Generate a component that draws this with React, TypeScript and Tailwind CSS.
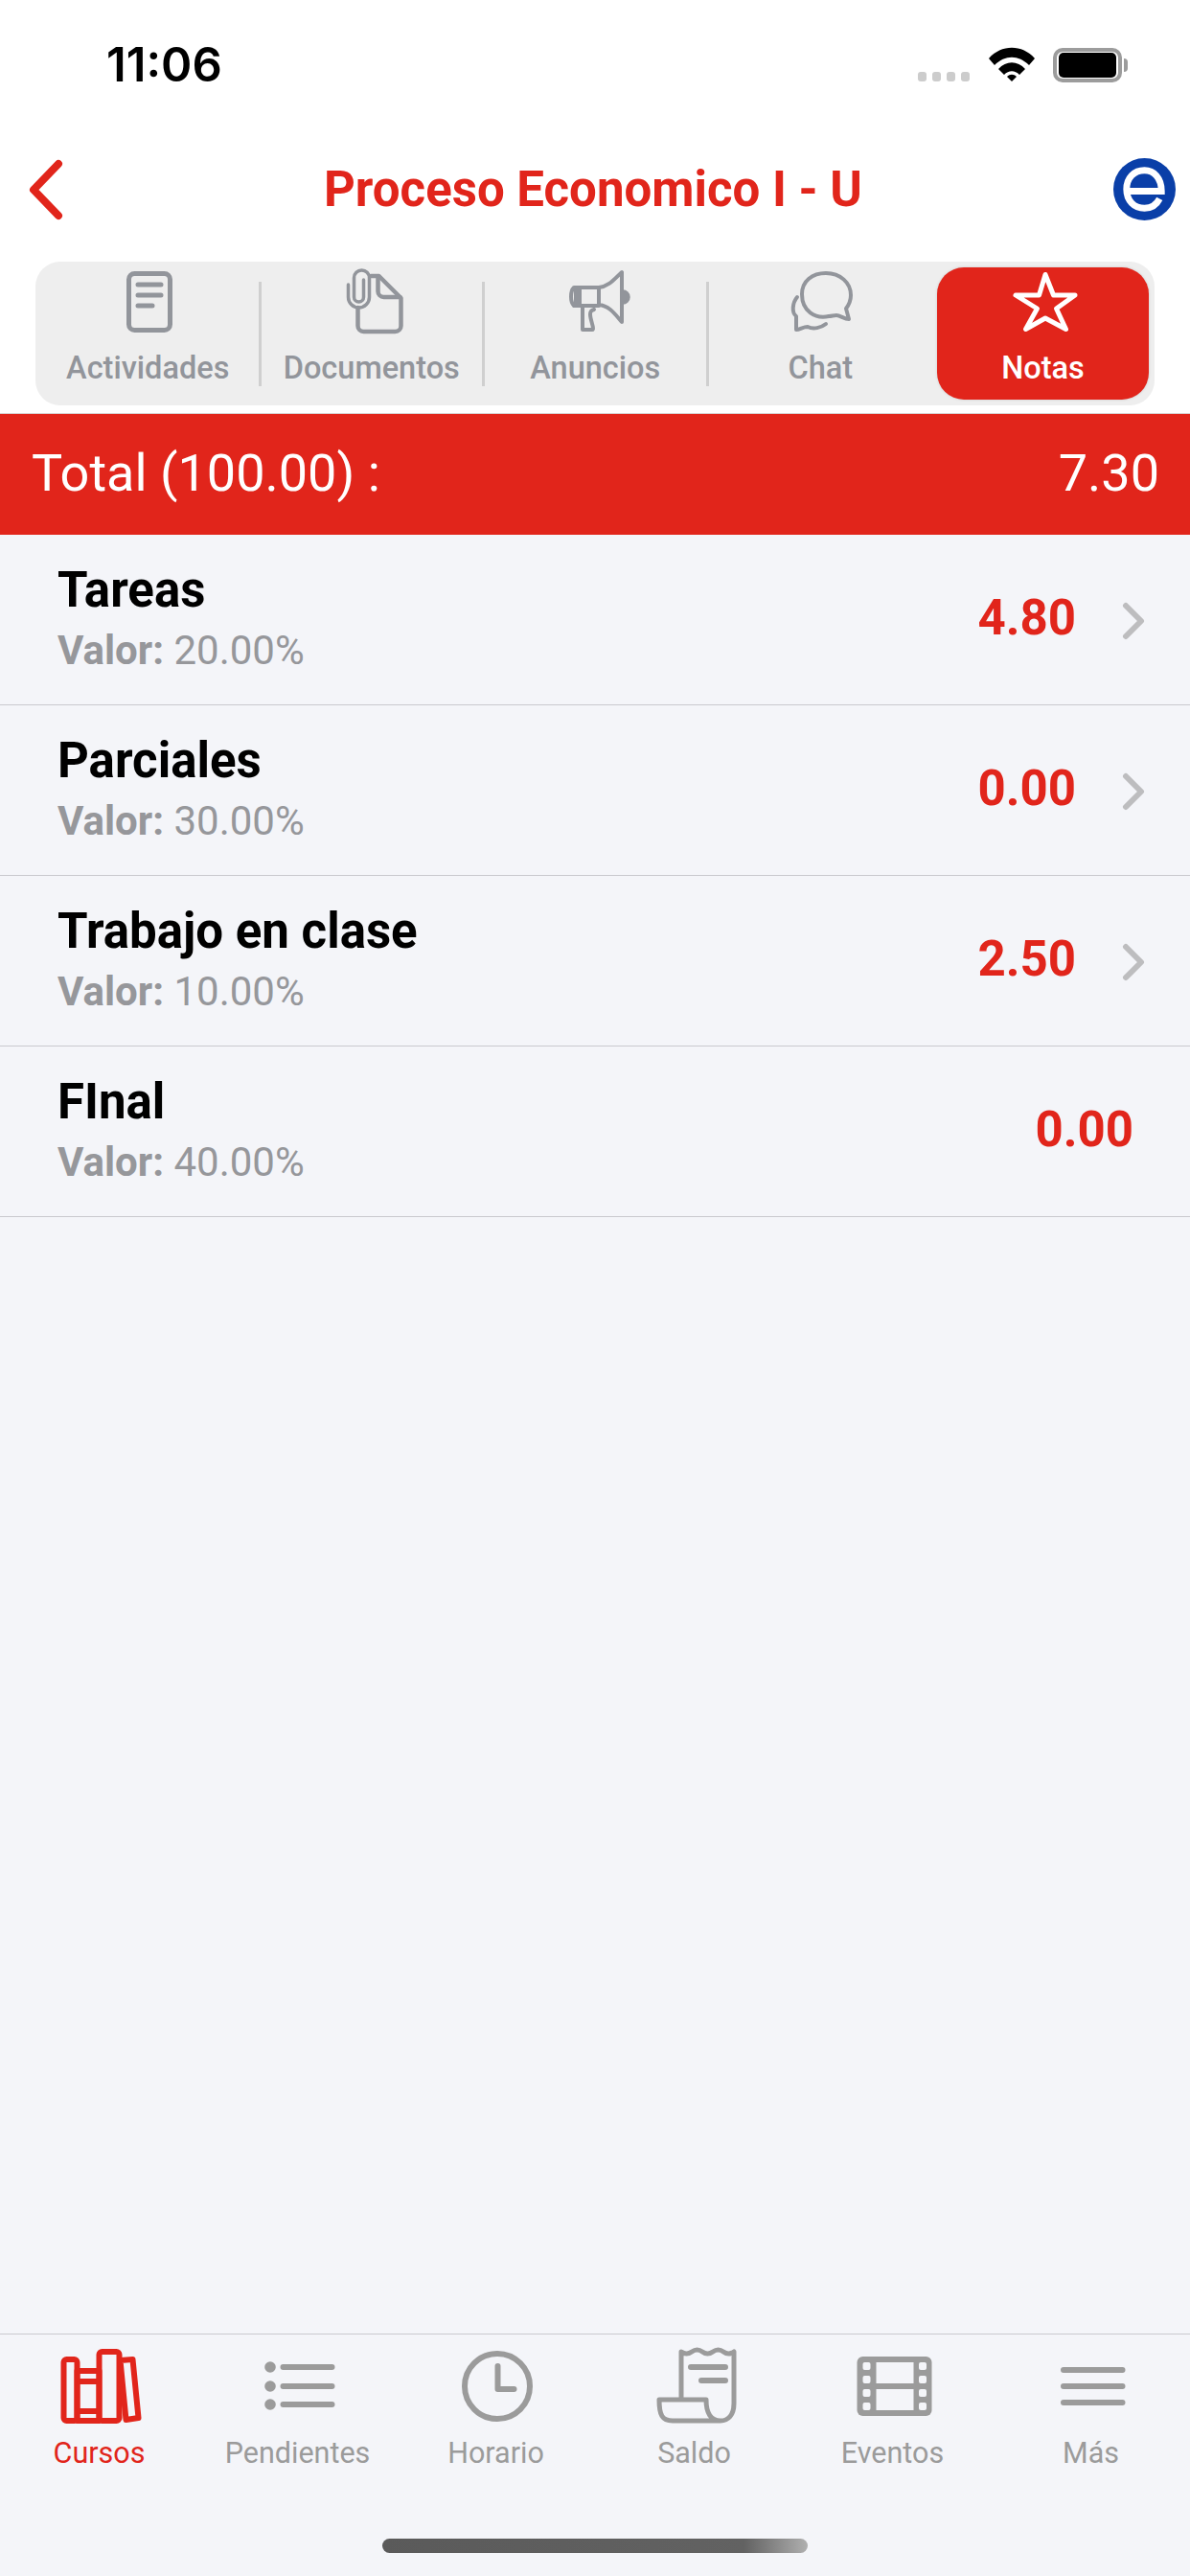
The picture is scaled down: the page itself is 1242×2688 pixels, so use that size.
const RED = "#e1251b";

const ROWS = [
  { title: "Tareas", valor: "20.00%", nota: "4.80", more: true },
  { title: "Parciales", valor: "30.00%", nota: "0.00", more: true },
  { title: "Trabajo en clase", valor: "10.00%", nota: "2.50", more: true },
  { title: "FInal", valor: "40.00%", nota: "0.00", more: false },
];

function ActividadesIcon() {
  return (
    <svg width="60" height="70" viewBox="-2 0 60 70" fill="none" stroke="currentColor" strokeWidth="5" strokeLinecap="round">
      <rect x="8.5" y="5.5" width="43" height="59" rx="6" />
      <path d="M18 17H42M18 28H42M18 39H33" />
    </svg>
  );
}

function DocumentosIcon() {
  return (
    <svg width="66" height="70" viewBox="-5.5 0 66 70" fill="none" stroke="currentColor" strokeWidth="4.5" strokeLinecap="round" strokeLinejoin="round">
      <path d="M27 8h8L58 31V60a6 6 0 0 1-6 6H19a6 6 0 0 1-6-6V41" />
      <path d="M34 9V24a6 6 0 0 0 6 6H57" />
      <path d="M3 17V30a11 11 0 0 0 22 0V10a8 8 0 0 0-16 0V30a5 5 0 0 0 10 0V12" strokeWidth="3.5" />
    </svg>
  );
}

function AnunciosIcon() {
  return (
    <svg width="78" height="70" viewBox="-8 0 78 70" fill="none" stroke="currentColor" strokeWidth="4" strokeLinecap="round" strokeLinejoin="round">
      <path d="M35 20C46 19 52 10 59 4V56C52 48 46 39 35 38Z" />
      <path d="M35 20H11V39H35" />
      <path d="M11 20H9C5 24 5 35 9 39H11M15 20V39" />
      <path d="M60 24a6 6 0 0 1 0 12" strokeWidth="3.5" fill="currentColor" />
      <path d="M18 39V64H28C31 64 26 54 26 48C26 45 27 44 30 43" />
    </svg>
  );
}

function ChatIcon() {
  return (
    <svg width="70" height="70" viewBox="0 0 70 70" fill="none" stroke="currentColor" strokeWidth="4" strokeLinecap="round" strokeLinejoin="round">
      <path d="M44 50C30 53 16 45 16 27C16 13 27 5 41 5C56 5 67 15 67 28C67 34 65 38 62 42L65 53C60 53 56 49 52 49C49 49 47 50 44 50Z" />
      <path d="M11 30C6 36 5 46 10 50V64C14 64 17 61 22 61C28 64 36 62 41 58" />
    </svg>
  );
}

function NotasIcon() {
  return (
    <svg width="72" height="66" viewBox="0 0 72 66" fill="none" stroke="currentColor" strokeWidth="5" strokeLinejoin="round">
      <path d="M38 5.5L46.5 27H69L49.5 41L59.5 62.5L38 51L17.5 62.5L29.5 41L7 27H31.5Z" />
    </svg>
  );
}

function CursosIcon() {
  return (
    <svg width="90" height="84" viewBox="0 0 90 84" fill="none" stroke="currentColor" strokeWidth="6" strokeLinejoin="round">
      <rect x="7.5" y="14" width="14" height="64" rx="3" />
      <rect x="21.5" y="26" width="23" height="52" />
      <path d="M21.5 37H44.5M21.5 68H44.5" />
      <rect x="44.5" y="6" width="21" height="72" rx="3" />
      <path d="M66.5 15L79.5 14L85.5 75L72.5 77Z" />
    </svg>
  );
}

function PendientesIcon() {
  return (
    <svg width="90" height="84" viewBox="0 0 90 84" fill="none" stroke="currentColor" strokeWidth="6" strokeLinecap="round">
      <path d="M29.5 22H80.5M29.5 42H80.5M29.5 61H80.5" />
      <g fill="currentColor" stroke="none">
        <circle cx="16" cy="22" r="5.8" />
        <circle cx="16" cy="42" r="5.8" />
        <circle cx="16" cy="61" r="5.8" />
      </g>
    </svg>
  );
}

function HorarioIcon() {
  return (
    <svg width="90" height="84" viewBox="0 0 90 84" fill="none" stroke="currentColor" strokeWidth="6" strokeLinecap="round" strokeLinejoin="round">
      <circle cx="46" cy="42" r="34" />
      <path d="M46.5 21V45H63.5" />
    </svg>
  );
}

function SaldoIcon() {
  return (
    <svg width="90" height="84" viewBox="0 0 90 84" fill="none" stroke="currentColor" strokeWidth="5" strokeLinecap="round" strokeLinejoin="round">
      <path d="M31 54V6q5.4 4 11 0t11 0t11 0t11 0t11 0V60C86 72 80 78 72 78H22C11 78 8 72 8 56H57C57 70 62 78 72 78" />
      <path d="M41 22H77M52 36H77" strokeWidth="6" />
    </svg>
  );
}

function EventosIcon() {
  const perf = [17, 31, 45, 59];
  return (
    <svg width="90" height="84" viewBox="0 0 90 84">
      <rect x="7.5" y="11" width="78" height="62" rx="6" fill="currentColor" />
      <rect x="27.5" y="17" width="39" height="22" fill="#f4f5f9" />
      <rect x="27.5" y="45" width="39" height="22" fill="#f4f5f9" />
      {perf.map((y) => (
        <g key={y} fill="#f4f5f9">
          <rect x="13.5" y={y} width="8" height="8" rx="2" />
          <rect x="72" y={y} width="8" height="8" rx="2" />
        </g>
      ))}
    </svg>
  );
}

function MasIcon() {
  return (
    <svg width="90" height="84" viewBox="0 0 90 84" fill="none" stroke="currentColor" strokeWidth="6" strokeLinecap="round">
      <path d="M16 25H77.5M16 42H77.5M16 59H77.5" />
    </svg>
  );
}

const TOP_TABS = [
  { label: "Actividades", icon: <ActividadesIcon /> },
  { label: "Documentos", icon: <DocumentosIcon /> },
  { label: "Anuncios", icon: <AnunciosIcon /> },
  { label: "Chat", icon: <ChatIcon /> },
];

const BOTTOM_TABS = [
  { label: "Cursos", icon: <CursosIcon />, active: true },
  { label: "Pendientes", icon: <PendientesIcon /> },
  { label: "Horario", icon: <HorarioIcon /> },
  { label: "Saldo", icon: <SaldoIcon /> },
  { label: "Eventos", icon: <EventosIcon /> },
  { label: "Más", icon: <MasIcon /> },
];

function StatusBar() {
  return (
    <div className="flex h-[134px] items-start justify-between pl-[111px] pr-[65px] pt-[49px]">
      <span className="font-['Inter',sans-serif] text-[49px] font-semibold leading-[37px] text-black">11:06</span>
      <div className="flex items-end">
        <div className="mb-[1px] flex gap-[5.5px]">
          {[0, 1, 2, 3].map((i) => (
            <span key={i} className="h-[10px] w-[9.5px] rounded-[3px] bg-[#cccccc]" />
          ))}
        </div>
        <svg className="ml-[20px]" width="48" height="37" viewBox="0 0 48 37" fill="#000">
          <path d="M0 12C13-3 35-3 48 12L42 19C31 8 17 8 6 19Z" />
          <path d="M10 23C18 14 30 14 38 23L32 29C27 24 21 24 16 29Z" />
          <path d="M19 31C22 28 26 28 29 31L24 36Z" />
        </svg>
        <div className="ml-[19px] flex items-center">
          <div className="flex h-[36px] w-[72px] items-center justify-center rounded-[10px] border-[4px] border-[#9c9c9c] bg-white">
            <div className="h-[26px] w-[60px] rounded-[5px] bg-black" />
          </div>
          <div className="ml-[2px] h-[14px] w-[4px] rounded-r-full bg-[#9c9c9c]" />
        </div>
      </div>
    </div>
  );
}

function Header() {
  return (
    <div className="flex h-[139px] items-center justify-between pb-[12px] pl-[26px] pr-[15px]">
      <svg width="44" height="66" viewBox="0 0 44 66" fill="none" stroke={RED} strokeWidth="8" strokeLinecap="round" strokeLinejoin="round">
        <path d="M35 6L9 33L35 60" />
      </svg>
      <span className="ml-[6px] font-['Roboto',sans-serif] text-[51px] font-bold leading-none" style={{ color: RED }}>
        Proceso Economico I - U
      </span>
      <svg width="65" height="65" viewBox="0 0 66 66" fill="none">
        <circle cx="33" cy="33" r="33" fill="#0a3fa8" />
        <path d="M15 35H51C51 21 43 13 33 13C22 13 14 21 14 33C14 45 22 53 33 53C41 53 46 49 49 43" stroke="#fff" strokeWidth="7" />
      </svg>
    </div>
  );
}

function TopTabs() {
  return (
    <div className="mx-[37px] flex h-[150px] rounded-[26px] bg-[#eeeeee] pl-[2px] font-['Roboto',sans-serif]">
      {TOP_TABS.map((tab) => (
        <div key={tab.label} className="flex flex-1 items-center">
          <div className="flex h-full flex-1 flex-col items-center pt-[7px] text-[#92959b]">
            {tab.icon}
            <span className="mt-[14px] text-[32.5px] font-medium leading-[40px]">{tab.label}</span>
          </div>
          {tab.label !== "Chat" && <div className="h-[109px] w-[3px] bg-[#cfcfcf]" />}
        </div>
      ))}
      <div className="my-[6px] ml-[5px] mr-[6px] flex w-[221px] flex-col items-center rounded-[28px] pt-[2px] text-white shadow-[0_0_3px_rgba(0,0,0,0.15)]" style={{ backgroundColor: RED }}>
        <NotasIcon />
        <span className="mt-[17px] text-[32.5px] font-medium leading-[40px]">Notas</span>
      </div>
    </div>
  );
}

function TotalBar() {
  return (
    <div className="mt-[8px] flex h-[127px] items-center justify-between border-t border-[#d8d0cf] pb-[4px] pl-[33px] pr-[32px] font-['Roboto',sans-serif] text-[54px] font-[450] text-white" style={{ backgroundColor: RED }}>
      <span>Total (100.00) :</span>
      <span>7.30</span>
    </div>
  );
}

function GradeRow({ title, valor, nota, more }: (typeof ROWS)[number]) {
  return (
    <div className="flex h-[178px] items-center border-b border-[#c9c9ce] pb-[4px] pl-[60px] font-['Roboto',sans-serif]">
      <div className="flex-1">
        <div className="text-[51px] font-bold leading-[60px] text-black">{title}</div>
        <div className="mt-[8px] text-[42px] leading-[50px] text-[#96979b]">
          <span className="font-bold">Valor:</span> {valor}
        </div>
      </div>
      <span className={more ? "mr-[48px] mt-[2px] text-[51px] font-bold" : "mr-[59px] mt-[2px] text-[51px] font-bold"} style={{ color: RED }}>
        {nota}
      </span>
      {more && (
        <svg className="mr-[43px] mt-[6px]" width="28" height="40" viewBox="0 0 28 40" fill="none" stroke="#bdbdbf" strokeWidth="6" strokeLinecap="round" strokeLinejoin="round">
          <path d="M4 4L20 20L4 36" />
        </svg>
      )}
    </div>
  );
}

function BottomTabs() {
  return (
    <div className="h-[253px] border-t border-[#c9c9ce] font-['Roboto',sans-serif]">
      <div className="grid grid-cols-6 pt-[12px]">
        {BOTTOM_TABS.map((tab) => (
          <div key={tab.label} className={tab.active ? "flex flex-col items-center" : "flex flex-col items-center text-[#9b9b9b]"} style={tab.active ? { color: RED } : undefined}>
            {tab.icon}
            <span className="mt-[10px] text-[30.5px] leading-[36px]">{tab.label}</span>
          </div>
        ))}
      </div>
      <div className="mx-auto mt-[71px] h-[15px] w-[444px] rounded-full bg-gradient-to-r from-[#5a5a5a] via-[#626262] via-85% to-[#b0b0b0]" />
    </div>
  );
}

export default function App() {
  return (
    <div className="flex h-[2688px] w-[1242px] flex-col overflow-hidden bg-[#f4f5f9]">
      <div className="bg-white">
        <StatusBar />
        <Header />
        <TopTabs />
      </div>
      <div className="bg-white">
        <TotalBar />
      </div>
      <div className="flex-1">
        {ROWS.map((row) => (
          <GradeRow key={row.title} {...row} />
        ))}
      </div>
      <BottomTabs />
    </div>
  );
}
